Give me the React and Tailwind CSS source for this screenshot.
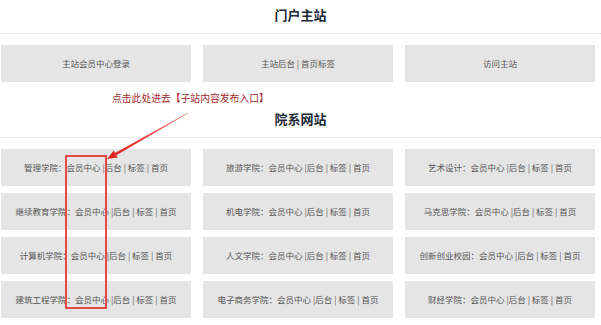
import React from "react";

const top = ["主站会员中心登录", "主站后台 | 首页标签", "访问主站"];
const colleges = [
  "管理学院：", "旅游学院：", "艺术设计：",
  "继续教育学院：", "机电学院：", "马克思学院：",
  "计算机学院：", "人文学院：", "创新创业校园：",
  "建筑工程学院：", "电子商务学院：", "财经学院：",
];

export default function App() {
  return (
    <div
      className="relative w-[601px] h-[325px] bg-white overflow-hidden"
      style={{ fontFamily: '"Microsoft YaHei", "Noto Sans CJK SC", "Liberation Sans", sans-serif' }}
    >
      <div className="h-[34px] pt-[7px] border-b border-dotted border-[#dcdcdc] text-center text-[13px] leading-[16px] font-bold text-[#1b2836]">
        门户主站
      </div>
      <div className="mt-[11px] ml-[1px] grid grid-cols-[190px_190px_190px] gap-x-[12px]">
        {top.map((t) => (
          <div key={t} className="h-[37px] bg-[#e5e5e5] flex items-center justify-center text-[8.5px] text-[#555]">
            {t}
          </div>
        ))}
      </div>
      <div className="mt-[10px] h-[12px] pl-[112px] text-[9.8px] leading-[12px] text-[#a3282b]">
        点击此处进去【子站内容发布入口】
      </div>
      <div className="mt-[7px] h-[27px] border-b border-dotted border-[#dcdcdc] text-center text-[13px] leading-[16px] font-bold text-[#1b2836]">
        院系网站
      </div>
      <div className="mt-[11px] ml-[1px] grid grid-cols-[190px_190px_190px] gap-x-[12px] gap-y-[7px]">
        {colleges.map((c) => (
          <div key={c} className="h-[37px] bg-[#e5e5e5] flex items-center justify-center text-[8.5px] text-[#555] whitespace-pre">
            {c + "会员中心 |后台 | 标签 | 首页"}
          </div>
        ))}
      </div>

      <div className="absolute left-[65px] top-[155px] w-[42px] h-[154px] border-2 border-[#e84848]" />
      <svg className="absolute left-0 top-0" width="601" height="325" viewBox="0 0 601 325">
        <defs>
          <linearGradient id="ag" x1="188" y1="113" x2="107" y2="159" gradientUnits="userSpaceOnUse">
            <stop offset="0" stopColor="#f08080" />
            <stop offset="0.5" stopColor="#e83a36" />
            <stop offset="1" stopColor="#e0201e" />
          </linearGradient>
        </defs>
        <polygon
          points="188.2,113.3 187.8,112.7 115.1,153.0 113.7,150.6 107,159 117.7,157.5 116.3,155.2"
          fill="url(#ag)"
        />
      </svg>
    </div>
  );
}
